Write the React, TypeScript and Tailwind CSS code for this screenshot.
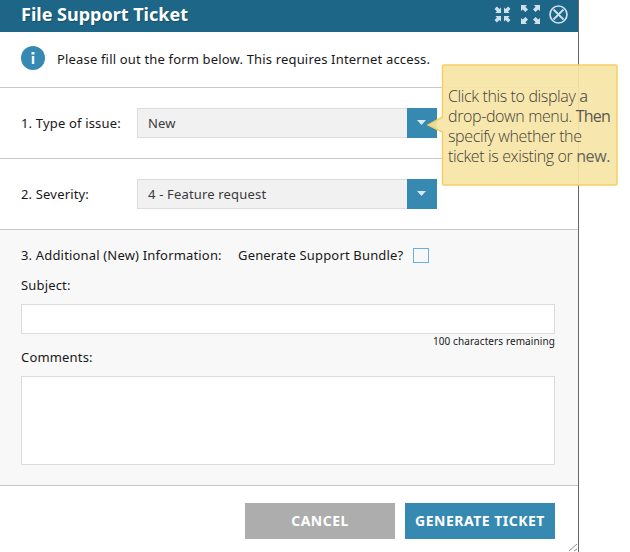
import React from "react";

function SelectRow({ label, value }: { label: string; value: string }) {
  return (
    <div className="flex h-[71px] items-center border-b border-[#c9c9c9] pl-[21px]">
      <label className="w-[116px] whitespace-nowrap">{label}</label>
      <button className="flex h-[30px] w-[300px] text-left tracking-[.17px]">
        <span className="flex h-full w-[270px] items-center border border-r-0 border-[#dcdcdc] bg-[#f1f1f1] pl-2.5 text-[#3a3a3a]">
          {value}
        </span>
        <span className="flex h-full w-[30px] items-center justify-center bg-[#368ab2]">
          <svg width="9" height="5" viewBox="0 0 9 5" className="mb-px mr-px" aria-hidden="true">
            <path d="M0 0h9L4.5 5z" fill="#d8e8f0" />
          </svg>
        </span>
      </button>
    </div>
  );
}

function Arrow({ transform }: { transform: string }) {
  return <path transform={transform} d="M0 0h6L4.4 1.8 7 4.4 4.4 7 1.8 4.4 0 6z" fill="#cfe0ea" />;
}

function HeaderIcons() {
  return (
    <div className="flex items-center text-[#cfe0ea]">
      <svg width="17" height="17" viewBox="0 0 17 17" aria-hidden="true">
        <Arrow transform="translate(7 7) scale(-.93)" />
        <Arrow transform="translate(10 7) scale(.93 -.93)" />
        <Arrow transform="translate(7 10) scale(-.93 .93)" />
        <Arrow transform="translate(10 10) scale(.93)" />
      </svg>
      <svg width="19" height="19" viewBox="0 0 19 19" className="ml-[10px]" aria-hidden="true">
        <Arrow transform="translate(0 0)" />
        <Arrow transform="translate(19 0) scale(-1 1)" />
        <Arrow transform="translate(0 19) scale(1 -1)" />
        <Arrow transform="translate(19 19) scale(-1)" />
      </svg>
      <svg width="19" height="19" viewBox="0 0 19 19" className="ml-[9px]" fill="none" stroke="currentColor" aria-hidden="true">
        <circle cx="9.5" cy="9.5" r="8.5" strokeWidth="1.7" />
        <path d="m4.500 4.500 10 10m0-10-10 10" strokeWidth="1.8" />
      </svg>
    </div>
  );
}

function Callout() {
  return (
    <aside className="absolute left-[427px] top-[64px] h-[122px] w-[191px] font-['Open_Sans',sans-serif]">
      <svg width="191" height="122" viewBox="0 0 191 122" className="absolute inset-0" aria-hidden="true">
        <path
          d="M17 1H188.5Q190 1 190 2.5V119.500Q190 121 188.500 121H17Q15.500 121 15.500 119.500V68L1 61L15.500 53V2.500Q15.500 1 17 1z"
          fill="#f6e5a6"
          fillOpacity=".92"
          stroke="#f5cf63"
          strokeWidth="1.500"
        />
      </svg>
      <p className="relative whitespace-nowrap pl-[21px] pt-[22px] text-[16px] font-light leading-5 tracking-[-0.37px] text-[#45423a]">
        Click this to display <span className="font-normal text-[#66635a]">a</span>
        <br />
        drop-down menu. <span className="font-normal tracking-[-0.8px] text-[#5b584f]">Then</span>
        <br />
        specify whether the
        <br />
        ticket is existing or <span className="font-medium text-[#66635a]">new.</span>
      </p>
    </aside>
  );
}

export default function App() {
  return (
    <div className="relative h-[552px] w-[630px] overflow-hidden bg-white font-['Noto_Sans',sans-serif] text-[13px] leading-5 tracking-[.17px] text-[#181818]">
      <main className="relative flex h-full w-[579px] flex-col border-r border-[#666]">
        <header className="flex h-8 shrink-0 items-center justify-between bg-[#1e6687] pb-[3px] pl-[21px] pr-[10px]">
          <h1 className="-mt-[2px] text-[18px] font-bold leading-6 tracking-normal text-white [text-shadow:1px_1px_1px_#174e67]">File Support Ticket</h1>
          <HeaderIcons />
        </header>
        <section className="flex h-14 items-center border-b border-[#c9c9c9] pb-[2px] pl-[21px]">
          <svg width="24" height="24" viewBox="0 0 24 24" className="-mt-px" aria-hidden="true">
            <circle cx="12" cy="12" r="12" fill="#368ab2" />
            <path d="M10.500 6h3v2.500h-3zM10.800 10h2.500v8h-2.500z" fill="#eef5f9" />
          </svg>
          <p className="ml-3 whitespace-nowrap">Please fill out the form below. This requires Internet access.</p>
        </section>
        <SelectRow label="1. Type of issue:" value="New" />
        <SelectRow label="2. Severity:" value="4 - Feature request" />
        <section className="h-64 border-b border-[#c9c9c9] bg-[#f8f8f8] pl-[21px] pr-[23px] pt-[15px]">
          <div className="flex items-center whitespace-nowrap">
            <span className="w-[217px]">3. Additional (New) Information:</span>
            <label className="w-[175px]">Generate Support Bundle?</label>
            <span className="h-[15px] w-4 border border-[#67b0df] bg-[#f8f8f8]" />
          </div>
          <label className="mt-[10px] block">Subject:</label>
          <div className="mt-[9px] h-[30px] border border-[#dcdcdc] bg-white" />
          <p className="text-right text-[10px] leading-[15px] tracking-[.1px]">100 characters remaining</p>
          <label className="-mt-[2px] block">Comments:</label>
          <div className="mt-[9px] h-[89px] border border-[#dcdcdc] bg-white" />
        </section>
        <footer className="flex gap-[10px] pl-[245px] pt-[17px] text-[14px] font-bold text-white">
          <button className="h-9 w-[150px] bg-[#adadad] tracking-[.5px]">CANCEL</button>
          <button className="h-9 w-[150px] whitespace-nowrap bg-[#368ab2] tracking-[.5px]">GENERATE TICKET</button>
        </footer>
        <svg width="9" height="9" viewBox="0 0 9 9" className="absolute bottom-0 right-0" aria-hidden="true">
          <path d="M0 8 8 1M5 8l3-2" stroke="#8b8b8b" fill="none" />
        </svg>
      </main>
      <Callout />
    </div>
  );
}
